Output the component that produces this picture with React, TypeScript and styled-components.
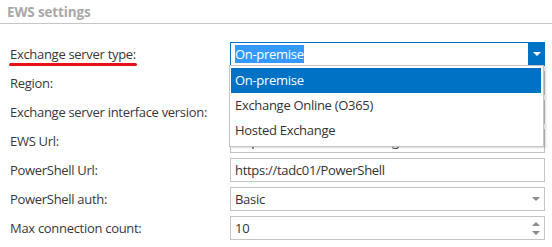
import React from "react";
import styled, { createGlobalStyle } from "styled-components";

const GlobalStyle = createGlobalStyle`
  html, body {
    margin: 0;
    padding: 0;
    background: #ffffff;
  }
  body {
    font-family: "Open Sans", "Noto Sans", sans-serif;
    color: #404040;
  }
`;

const Panel = styled.div`
  position: relative;
  width: 552px;
  height: 247px;
  overflow: hidden;
`;

const Header = styled.div`
  height: 23px;
  padding-left: 7px;
  border-bottom: 1px solid #c6c6c6;
  font-size: 13.5px;
  font-weight: 700;
  line-height: 24px;
  color: #a8a8a8;
  letter-spacing: -0.15px;
`;

const Form = styled.div`
  display: grid;
  grid-template-columns: 220px 315px;
  grid-auto-rows: 24px;
  row-gap: 5px;
  padding: 18px 0 0 10px;
`;

const Label = styled.div<{ $marked?: boolean }>`
  display: flex;
  align-items: center;
  font-size: 13px;
  letter-spacing: -0.3px;
  color: #383838;
  span {
    position: relative;
  }
  ${({ $marked }) =>
    $marked &&
    `
    span::after {
      content: "";
      position: absolute;
      left: -1px;
      right: -1px;
      bottom: -3px;
      height: 3px;
      border-radius: 2px;
      background: #e8101a;
    }
  `}
`;

const Field = styled.div<{ $active?: boolean }>`
  display: flex;
  align-items: center;
  box-sizing: border-box;
  height: 24px;
  border: 1px solid ${({ $active }) => ($active ? "#0072c6" : "#c4c4c4")};
  background: #fff;
  font-size: 13px;
  letter-spacing: -0.3px;
  color: #333;
  padding-left: 4px;
`;

const Value = styled.span<{ $selected?: boolean }>`
  flex: 1;
  white-space: nowrap;
  overflow: hidden;
  span {
    background: ${({ $selected }) => ($selected ? "#3399ff" : "transparent")};
    color: ${({ $selected }) => ($selected ? "#fff" : "inherit")};
    padding: 1px 0;
  }
`;

const ArrowButton = styled.div<{ $blue?: boolean }>`
  display: flex;
  flex-direction: column;
  align-items: center;
  justify-content: center;
  gap: 5px;
  width: 17px;
  align-self: stretch;
  margin: ${({ $blue }) => ($blue ? "-1px -1px -1px 0" : "0")};
  background: ${({ $blue }) => ($blue ? "#0072c6" : "transparent")};
`;

const Tri = styled.div<{ $up?: boolean; $color: string }>`
  width: 0;
  height: 0;
  border-left: 4px solid transparent;
  border-right: 4px solid transparent;
  ${({ $up, $color }) =>
    $up
      ? `border-bottom: 4px solid ${$color};`
      : `border-top: 4px solid ${$color};`}
`;

const DropList = styled.div`
  position: absolute;
  left: 229px;
  top: 65px;
  width: 315px;
  box-sizing: border-box;
  padding: 2px 2px 3px 1px;
  background: #fff;
  border: 1px solid #c4c4c4;
  box-shadow: 2px 1px 2px rgba(0, 0, 0, 0.15);
`;

const Option = styled.div<{ $selected?: boolean }>`
  height: 25px;
  line-height: 25px;
  padding-left: 4px;
  font-size: 13px;
  letter-spacing: -0.3px;
  background: ${({ $selected }) => ($selected ? "#0072c6" : "transparent")};
  color: ${({ $selected }) => ($selected ? "#fff" : "#333")};
`;

type Row = {
  label: string;
  value?: string;
  kind?: "text" | "select" | "spin";
};

const rows: Row[] = [
  { label: "Region:", kind: "select" },
  { label: "Exchange server interface version:", kind: "select" },
  { label: "EWS Url:", value: "https://tadc01/EWS/Exchange.asmx" },
  { label: "PowerShell Url:", value: "https://tadc01/PowerShell" },
  { label: "PowerShell auth:", value: "Basic", kind: "select" },
  { label: "Max connection count:", value: "10", kind: "spin" },
];

export default function App() {
  return (
    <Panel>
      <GlobalStyle />
      <Header>EWS settings</Header>
      <Form>
        <Label $marked>
          <span>Exchange server type:</span>
        </Label>
        <Field $active>
          <Value $selected>
            <span>On-premise</span>
          </Value>
          <ArrowButton $blue>
            <Tri $color="#ffffff" />
          </ArrowButton>
        </Field>
        {rows.map((r) => (
          <React.Fragment key={r.label}>
            <Label>
              <span>{r.label}</span>
            </Label>
            <Field>
              <Value>
                <span>{r.value ?? ""}</span>
              </Value>
              {r.kind === "select" && (
                <ArrowButton>
                  <Tri $color="#8a8a8a" />
                </ArrowButton>
              )}
              {r.kind === "spin" && (
                <ArrowButton>
                  <Tri $up $color="#8a8a8a" />
                  <Tri $color="#8a8a8a" />
                </ArrowButton>
              )}
            </Field>
          </React.Fragment>
        ))}
      </Form>
      <DropList>
        <Option $selected>On-premise</Option>
        <Option>Exchange Online (O365)</Option>
        <Option>Hosted Exchange</Option>
      </DropList>
    </Panel>
  );
}
